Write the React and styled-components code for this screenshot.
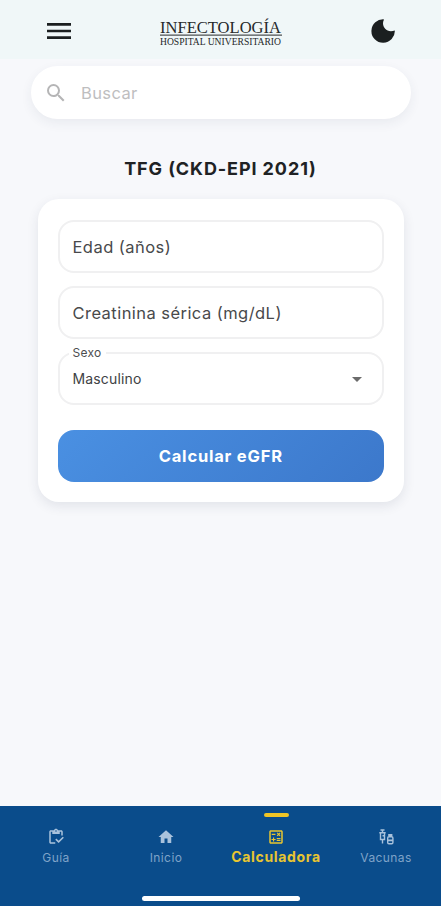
import React,{useState} from 'react'
import styled,{createGlobalStyle,css} from 'styled-components'
import {
  MdMenu,
  MdSearch,
  MdArrowDropDown,
  MdHome,
  MdOutlineCalculate,
  MdOutlineInventory
} from 'react-icons/md'

const GlobalStyle=createGlobalStyle`
  *{
    box-sizing: border-box;
  }
  body{
    margin: 0;
    background-color: #f7f8fb;
    font-family: Inter, "Liberation Sans", sans-serif;
  }
  button,input{
    font-family: inherit;
  }
`

const Screen=styled.div`
  display: flex;
  flex-direction: column;
  height: 100vh;
  overflow: hidden;
`

const Header=styled.header`
  display: flex;
  align-items: center;
  justify-content: space-between;
  flex-shrink: 0;
  height: 59px;
  padding: 3px 42px 0 43px;
  background-color: #f0f7f8;
`

const IconButton=styled.button`
  display: flex;
  align-items: center;
  justify-content: center;
  width: 32px;
  height: 32px;
  padding: 0;
  border: none;
  background: none;
  color: #1b1f20;
  cursor: pointer;
`

const LogoImage=styled.svg`
  display: block;
  width: 124px;
  height: 40px;
  font-family: "Liberation Serif", serif;
  fill: #26292a;
  overflow: visible;
`

const Content=styled.main`
  display: flex;
  flex-direction: column;
  flex: 1;
  padding-top: 7px;
`

const SearchBar=styled.label`
  display: flex;
  align-items: center;
  flex-shrink: 0;
  gap: 13px;
  height: 53px;
  margin: 0 30.5px 0 31px;
  padding: 0 20px 0 13px;
  border-radius: 27px;
  background-color: #fff;
  box-shadow: 0 4px 12px rgba(40,50,80,0.07);
  color: #b5b5b6;
`

const SearchInput=styled.input`
  flex: 1;
  min-width: 0;
  padding: 0;
  border: none;
  outline: none;
  background: none;
  color: #444;
  font-size: 16.5px;
  letter-spacing: 0.4px;
  &::placeholder{
    color: #bebebf;
    opacity: 1;
  }
`

const Title=styled.h1`
  margin: 39px 0 0;
  color: #202224;
  font-size: 18px;
  font-weight: 700;
  line-height: 22px;
  letter-spacing: 0.9px;
  text-align: center;
`

const Card=styled.section`
  display: flex;
  flex-direction: column;
  gap: 13px;
  margin: 19px 37px 0 37.5px;
  padding: 21px 20px 20px;
  border-radius: 21px;
  background-color: #fff;
  box-shadow: 0 4px 12px rgba(40,50,80,0.1);
`

const fieldBox=css`
  height: 53px;
  margin: 0;
  border: 2px solid #f0f0f1;
  border-radius: 16px;
  background-color: #fff;
`

const Field=styled.input`
  ${fieldBox}
  width: 100%;
  padding: 1px 13px 0;
  outline: none;
  color: #444648;
  font-size: 16.5px;
  letter-spacing: 0.45px;
  &::placeholder{
    color: #48494b;
    opacity: 1;
  }
`

const SelectBox=styled.div`
  ${fieldBox}
  position: relative;
  display: flex;
  align-items: center;
  justify-content: space-between;
  padding: 0 13px;
  color: #404244;
  font-size: 14px;
  letter-spacing: 0.15px;
  cursor: pointer;
`

const SelectLabel=styled.span`
  position: absolute;
  top: -9px;
  left: 9px;
  padding: 0 4px;
  background-color: #fff;
  color: #4c4d4f;
  font-size: 12px;
  line-height: 15px;
  letter-spacing: 0.3px;
`

const SubmitButton=styled.button`
  height: 52px;
  margin-top: 12px;
  border: none;
  border-radius: 16px;
  background: linear-gradient(135deg, #4a90e2, #3c78cb);
  color: #fff;
  font-size: 16.5px;
  font-weight: 700;
  letter-spacing: 0.8px;
  cursor: pointer;
`

const BottomBar=styled.nav`
  display: flex;
  flex-direction: column;
  flex-shrink: 0;
  align-items: center;
  justify-content: space-between;
  height: 100px;
  padding-bottom: 5px;
  background-color: #0a4c8b;
`

const Tabs=styled.div`
  display: grid;
  grid-template-columns: repeat(4, 1fr);
  width: 100%;
  padding-left: 1px;
`

const Tab=styled.button`
  display: flex;
  flex-direction: column;
  align-items: center;
  min-width: 0;
  padding: 7px 0 0;
  border: none;
  background: none;
  color: ${props=>props.$active ? '#e8c531' : '#a9c2dc'};
  cursor: pointer;
`

const TabMarker=styled.span`
  width: 25px;
  height: 4px;
  margin-bottom: 11px;
  border-radius: 2px;
  background-color: ${props=>props.$active ? '#f0c526' : 'transparent'};
`

const TabLabel=styled.span`
  margin-top: ${props=>props.$active ? '3px' : '4px'};
  color: ${props=>props.$active ? '#e8c531' : '#7fa3c8'};
  font-size: ${props=>props.$active ? '14px' : '12px'};
  font-weight: ${props=>props.$active ? 700 : 400};
  line-height: 16px;
  letter-spacing: ${props=>props.$active ? '0.65px' : '0.4px'};
`

const HomeIndicator=styled.div`
  width: 158px;
  height: 5px;
  border-radius: 3px;
  background-color: #fff;
`

const Logo=()=>(
  <LogoImage viewBox="0 0 124 40" role="img" aria-label="Infectología Hospital Universitario">
    <text x="1" y="22" fontSize="17.5" textLength="121" lengthAdjust="spacingAndGlyphs">INFECTOLOGÍA</text>
    <rect x="1" y="23.6" width="122" height="1"/>
    <text x="1" y="33.5" fontSize="11" textLength="121" lengthAdjust="spacingAndGlyphs">HOSPITAL UNIVERSITARIO</text>
  </LogoImage>
)

const Moon=()=>(
  <svg width="24" height="24" viewBox="0 0 24 24" fill="currentColor">
    <path d="M13 .4C9.6 6.8 15.3 14.6 23.8 11.4A11.7 11.7 0 1 1 13 .4Z"/>
  </svg>
)

// syringe next to a small vial
const Vaccine=({size})=>(
  <svg width={size} height={size} viewBox="0 0 18 18" fill="none" stroke="currentColor" strokeWidth="1.4">
    <path d="M3.5 2H7.5M5.5 2V4.5M2.3 4.7H8.7M3.5 4.7V11.5H7.5V4.7M5.5 11.5V15.5M5.5 7.8H7.5"/>
    <rect x="10.7" y="8.7" width="5.2" height="7.1" rx="1.2"/>
    <path d="M11.2 7H15.4M10.7 12.3H15.9" strokeWidth="1.8"/>
  </svg>
)

const tabs=[
  {name:'Guía',Icon:MdOutlineInventory},
  {name:'Inicio',Icon:MdHome},
  {name:'Calculadora',Icon:MdOutlineCalculate},
  {name:'Vacunas',Icon:Vaccine}
]

const App = () => {
  const [search,setSearch]=useState('');
  const [age,setAge]=useState('');
  const [creatinine,setCreatinine]=useState('');
  const [sex,setSex]=useState('Masculino');
  const [currentTab,setCurrentTab]=useState('Calculadora');

  return (
    <>
      <GlobalStyle/>
      <Screen>
        <Header>
          <IconButton aria-label="Menú"><MdMenu size={32}/></IconButton>
          <Logo/>
          <IconButton aria-label="Modo oscuro"><Moon/></IconButton>
        </Header>
        <Content>
          <SearchBar>
            <MdSearch size={24}/>
            <SearchInput placeholder="Buscar" value={search} onChange={(e)=>setSearch(e.target.value)}/>
          </SearchBar>
          <Title>TFG (CKD-EPI 2021)</Title>
          <Card>
            <Field placeholder="Edad (años)" value={age} onChange={(e)=>setAge(e.target.value)}/>
            <Field placeholder="Creatinina sérica (mg/dL)" value={creatinine} onChange={(e)=>setCreatinine(e.target.value)}/>
            <SelectBox onClick={()=>setSex(sex==='Masculino' ? 'Femenino' : 'Masculino')}>
              <SelectLabel>Sexo</SelectLabel>
              {sex}
              <MdArrowDropDown size={24} color="#6b6b6b"/>
            </SelectBox>
            <SubmitButton>Calcular eGFR</SubmitButton>
          </Card>
        </Content>
        <BottomBar>
          <Tabs>
            {tabs.map(({name,Icon})=>(
              <Tab key={name} $active={currentTab===name} onClick={()=>setCurrentTab(name)}>
                <TabMarker $active={currentTab===name}/>
                <Icon size={18}/>
                <TabLabel $active={currentTab===name}>{name}</TabLabel>
              </Tab>
            ))}
          </Tabs>
          <HomeIndicator/>
        </BottomBar>
      </Screen>
    </>
  )
}

export default App
